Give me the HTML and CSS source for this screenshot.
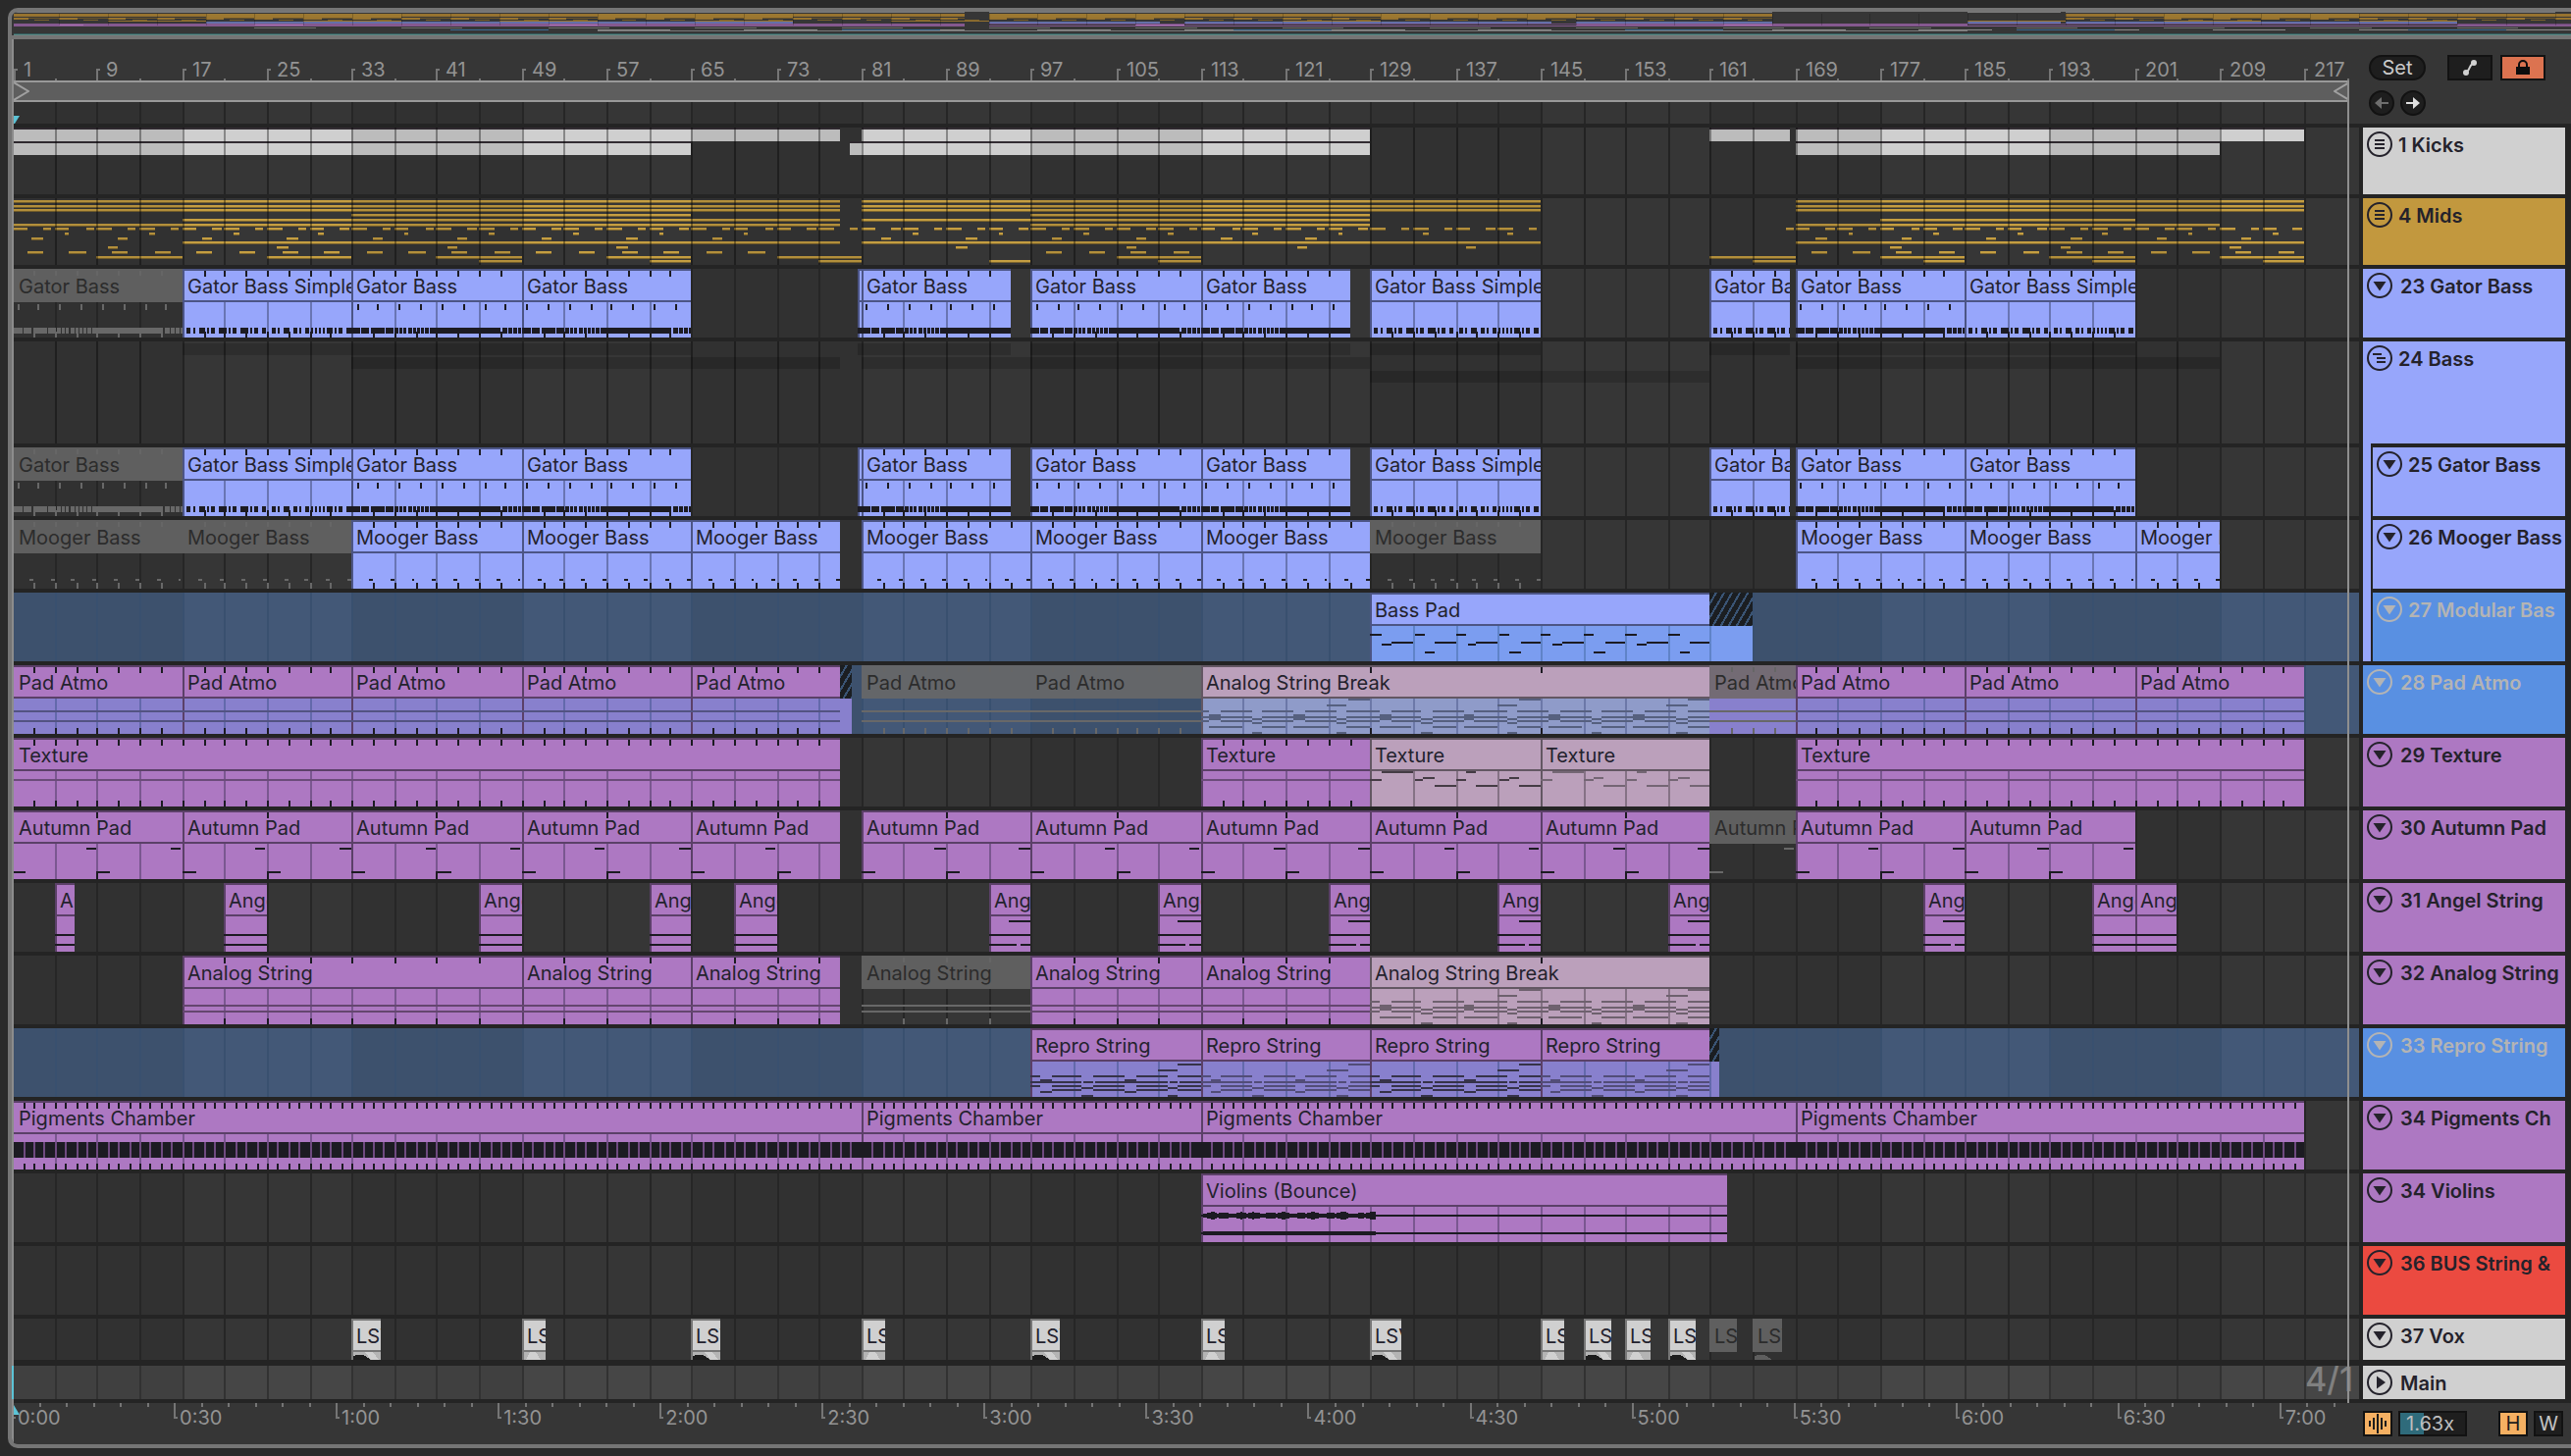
FILE: index.html
```html
<!DOCTYPE html>
<html lang="en">
<head>
  <meta charset="UTF-8">
  <meta content="width=device-width, initial-scale=1.0" name="viewport">
  <title>Arrangement</title>
  <link rel="stylesheet" href="styles.css">
</head>
<body>
<svg class="symbols" aria-hidden="true">
  <symbol id="fold" viewBox="0 0 26 26"><circle cx="13" cy="13" r="12" fill="none" stroke="currentColor" stroke-width="2"/><path d="M6.500 9h13L13 18.500z" fill="currentColor"/></symbol>
  <symbol id="unfold" viewBox="0 0 26 26"><circle cx="13" cy="13" r="12" fill="none" stroke="currentColor" stroke-width="2"/><path d="M10 6.500v13l9-6.500z" fill="currentColor"/></symbol>
  <symbol id="group" viewBox="0 0 26 26"><circle cx="13" cy="13" r="12" fill="none" stroke="currentColor" stroke-width="2"/><path d="M8 9h10M8 13h10M8 17h10" stroke="currentColor" stroke-width="2"/></symbol>
  <symbol id="group-open" viewBox="0 0 26 26"><circle cx="13" cy="13" r="12" fill="none" stroke="currentColor" stroke-width="2"/><path d="M6 9h9M10 13h9M10 17h9" stroke="currentColor" stroke-width="2"/></symbol>
</svg>

<main class="arrangement">
  <div class="overview"></div>

  <div class="top">
    <div class="time-area">
      <div class="bar-ruler"></div>
      <div class="loop">
        <div class="loop-brace">
          <svg width="16" height="18" viewBox="0 0 16 18"><path d="M0 0l15 9-15 9" fill="none" stroke="#a0a0a0" stroke-width="2"/></svg>
          <svg width="16" height="18" viewBox="0 0 16 18"><path d="M16 0L1 9l15 9" fill="none" stroke="#a0a0a0" stroke-width="2"/></svg>
        </div>
      </div>
      <div class="scrub lane" data-lane="scrub">
        <svg class="playhead" width="6" height="8" viewBox="0 0 6 8"><path d="M0 0h6L1 8H0z" fill="#5cc3d6"/></svg>
      </div>
    </div>
    <div class="panel">
      <div class="panel-row">
        <button type="button" class="pill">Set</button>
        <button type="button" class="square automation" aria-label="Automation mode"><svg width="16" height="18" viewBox="0 0 16 18"><path d="M3 14C8 14 7 4 13 4" fill="none" stroke="#d0d0d0" stroke-width="2"/><circle cx="4" cy="14" r="3" fill="#d0d0d0"/><circle cx="12" cy="4" r="3" fill="#d0d0d0"/></svg></button>
        <button type="button" class="square lock" aria-label="Lock envelopes"><svg width="16" height="16" viewBox="0 0 16 16"><path d="M4 8V5a4 4 0 0 1 8 0v3" fill="none" stroke="#0d0d0d" stroke-width="2"/><path d="M1 7h14v8H1z" fill="#0d0d0d"/></svg></button>
      </div>
      <div class="panel-row arrows">
        <button type="button" class="round" aria-label="Previous locator"><svg width="16" height="14" viewBox="0 0 16 14"><path d="M15 7H4" stroke="#6e6e6e" stroke-width="2"/><path d="M8 1v12L1 7z" fill="#6e6e6e"/></svg></button>
        <button type="button" class="round" aria-label="Next locator"><svg width="16" height="14" viewBox="0 0 16 14"><path d="M1 7h11" stroke="#e0e0e0" stroke-width="2"/><path d="M8 1v12l7-6z" fill="#e0e0e0"/></svg></button>
      </div>
    </div>
  </div>

  <div class="tracks">
    <section class="track group">
      <div class="lane" data-lane="kicks"></div>
      <header class="head white"><button type="button" class="fold" aria-label="Unfold"><svg><use href="#group"/></svg></button>1 Kicks</header>
    </section>
    <section class="track group">
      <div class="lane" data-lane="mids"></div>
      <header class="head gold"><button type="button" class="fold" aria-label="Unfold"><svg><use href="#group"/></svg></button>4 Mids</header>
    </section>
    <section class="track">
      <div class="lane" data-lane="gator"></div>
      <header class="head blue"><button type="button" class="fold" aria-label="Fold"><svg><use href="#fold"/></svg></button>23 Gator Bass</header>
    </section>
    <section class="track group tall">
      <div class="lane" data-lane="bass"></div>
      <header class="head blue"><button type="button" class="fold" aria-label="Fold"><svg><use href="#group-open"/></svg></button>24 Bass</header>
    </section>
    <section class="track nested">
      <div class="lane" data-lane="gator2"></div>
      <header class="head blue"><button type="button" class="fold" aria-label="Fold"><svg><use href="#fold"/></svg></button>25 Gator Bass</header>
    </section>
    <section class="track nested">
      <div class="lane" data-lane="mooger"></div>
      <header class="head blue"><button type="button" class="fold" aria-label="Fold"><svg><use href="#fold"/></svg></button>26 Mooger Bass</header>
    </section>
    <section class="track nested selected">
      <div class="lane" data-lane="basspad"></div>
      <header class="head"><button type="button" class="fold" aria-label="Fold"><svg><use href="#fold"/></svg></button>27 Modular Bas</header>
    </section>
    <section class="track selected">
      <div class="lane" data-lane="padatmo"></div>
      <header class="head"><button type="button" class="fold" aria-label="Fold"><svg><use href="#fold"/></svg></button>28 Pad Atmo</header>
    </section>
    <section class="track">
      <div class="lane" data-lane="texture"></div>
      <header class="head purple"><button type="button" class="fold" aria-label="Fold"><svg><use href="#fold"/></svg></button>29 Texture</header>
    </section>
    <section class="track">
      <div class="lane" data-lane="autumn"></div>
      <header class="head purple"><button type="button" class="fold" aria-label="Fold"><svg><use href="#fold"/></svg></button>30 Autumn Pad</header>
    </section>
    <section class="track">
      <div class="lane" data-lane="angel"></div>
      <header class="head purple"><button type="button" class="fold" aria-label="Fold"><svg><use href="#fold"/></svg></button>31 Angel String</header>
    </section>
    <section class="track">
      <div class="lane" data-lane="analog"></div>
      <header class="head purple"><button type="button" class="fold" aria-label="Fold"><svg><use href="#fold"/></svg></button>32 Analog String</header>
    </section>
    <section class="track selected">
      <div class="lane" data-lane="repro"></div>
      <header class="head"><button type="button" class="fold" aria-label="Fold"><svg><use href="#fold"/></svg></button>33 Repro String</header>
    </section>
    <section class="track">
      <div class="lane" data-lane="pigments"></div>
      <header class="head purple"><button type="button" class="fold" aria-label="Fold"><svg><use href="#fold"/></svg></button>34 Pigments Ch</header>
    </section>
    <section class="track">
      <div class="lane" data-lane="violins"></div>
      <header class="head purple"><button type="button" class="fold" aria-label="Fold"><svg><use href="#fold"/></svg></button>34 Violins</header>
    </section>
    <section class="track">
      <div class="lane" data-lane="bus"></div>
      <header class="head red"><button type="button" class="fold" aria-label="Fold"><svg><use href="#fold"/></svg></button>36 BUS String &amp;</header>
    </section>
    <section class="track short">
      <div class="lane" data-lane="vox"></div>
      <header class="head white"><button type="button" class="fold" aria-label="Fold"><svg><use href="#fold"/></svg></button>37 Vox</header>
    </section>
    <section class="track main-track">
      <div class="lane" data-lane="main"><span class="grid-size">4/1</span></div>
      <header class="head white"><button type="button" class="fold" aria-label="Unfold"><svg><use href="#unfold"/></svg></button>Main</header>
    </section>
    <div class="end-area"><div class="end-line"></div></div>
  </div>

  <div class="bottom">
    <div class="time-ruler"></div>
    <div class="zoom-controls">
      <button type="button" class="toggle on" aria-label="Waveform zoom"><svg width="22" height="22" viewBox="0 0 22 22"><path d="M3 8v6M7 5v12M11 1v20M15 5v12M19 8v6" stroke="#1c1c1c" stroke-width="2"/></svg></button>
      <input class="zoom" type="text" value="1.63x" aria-label="Zoom">
      <button type="button" class="toggle on height">H</button>
      <button type="button" class="toggle">W</button>
    </div>
  </div>
</main>
<script src="script.js"></script>
</body>
</html>
```
FILE: styles.css
```css
* {
  box-sizing: border-box;
}

body {
  background: #2a2a2a;
  color: #939393;
  font-family: Inter, "Liberation Sans", sans-serif;
  font-size: 20px;
  margin: 0;
  padding: 8px 0 8px 8px;
}

button,
input {
  color: inherit;
  font: inherit;
  margin: 0;
}

.symbols {
  display: none;
}

.arrangement {
  background: #363636;
  border: 4px solid #757575;
  border-radius: 10px 0 0 10px;
  border-right: 0;
  overflow: hidden;
}

.overview {
  border-bottom: 4px solid #757575;
  height: 28px;
  padding-left: 2px;

  & svg {
    display: block;
    height: 24px;
    width: 100%;
  }
}

/* ruler, loop brace and scrub area */

.top,
.tracks,
.bottom {
  border-left: 2px solid #8c8c8c;
}

.top {
  display: flex;
  gap: 4px;
  padding-right: 6px;
}

.time-area {
  flex: 1;
  min-width: 0;
}

.bar-ruler,
.time-ruler {
  height: 42px;
  overflow: hidden;
  position: relative;
}

.mark {
  border-left: 2px solid #757575;
  position: absolute;
}

.bar-ruler .mark {
  bottom: 0;
  height: 2px;

  &.major {
    height: 12px;
  }

  &.major::before {
    background: #757575;
    content: "";
    height: 2px;
    left: 0;
    position: absolute;
    top: 0;
    width: 2px;
  }

  & span {
    bottom: 1px;
    left: 8px;
    line-height: 20px;
    position: absolute;
  }
}

.time-ruler .mark {
  height: 4px;
  top: 0;

  &.major {
    height: 16px;
  }

  &.major::before {
    background: #757575;
    bottom: 0;
    content: "";
    height: 2px;
    left: 0;
    position: absolute;
    width: 2px;
  }

  & span {
    left: 4px;
    line-height: 20px;
    position: absolute;
    top: 5px;
  }
}

.time-ruler .start {
  left: 0;
  position: absolute;
  top: 2px;
}

.loop-brace {
  background: #5e5e5e;
  border-block: 2px solid #999;
  display: flex;
  height: 22px;
  justify-content: space-between;
  width: 99.6%;
}

.scrub {
  height: 22px;
}

.playhead {
  bottom: 0;
  left: 0;
  position: absolute;
}

.panel {
  display: flex;
  flex-direction: column;
  gap: 10px;
  padding: 16px 0 0 6px;
  width: 206px;
}

.panel-row {
  display: flex;
  gap: 8px;

  &.arrows {
    gap: 6px;
  }

  & button {
    align-items: center;
    background: #1e1e1e;
    border: 2px solid #121212;
    color: #cacaca;
    display: flex;
    height: 26px;
    justify-content: center;
    padding: 0;
  }

  & .pill {
    border-radius: 13px;
    margin-right: 14px;
    width: 58px;
  }

  & .square {
    width: 46px;
  }

  & .lock {
    background: #dc7350;
  }

  & .round {
    border-radius: 50%;
    width: 26px;
  }
}

/* tracks */

.tracks {
  background: #242424;
  display: flex;
  flex-direction: column;
  gap: 4px;
  padding-block: 4px;
  position: relative;
}

.track {
  display: flex;
  gap: 4px;
  height: 70px;
  padding-right: 6px;

  &.group {
    height: 68px;
  }

  &.tall {
    height: 104px;
  }

  &.short {
    height: 42px;
  }

  &.main-track {
    height: 34px;
    margin-top: 2px;
  }
}

.lane {
  background: #363636;
  flex: 1;
  min-width: 0;
  overflow: hidden;
  position: relative;
}

.lane > .notes {
  display: block;
  height: 100%;
  width: 100%;
}

.main-track .lane {
  background: #464646;
  box-shadow: -2px 0 #5cc3d6;
}

.selected .lane {
  background: #435877;
}

.title {
  color: #23222d;
  height: 34px;
  line-height: 36px;
  overflow: hidden;
  padding-left: 5px;
  position: absolute;
  top: 0;
  white-space: nowrap;

  &.off {
    color: #2c2c2c;
  }
}

.tail {
  background: repeating-linear-gradient(120deg, #1b1e22 0 5px, #3a5474 5px 7px);
  height: 34px;
  position: absolute;
  top: 0;
}

.grid-size {
  color: #808080;
  font-size: 34px;
  font-weight: 500;
  line-height: 28px;
  position: absolute;
  right: 6px;
  top: 0;
}

.head {
  color: #24222b;
  display: flex;
  font-weight: 600;
  gap: 8px;
  line-height: 36px;
  overflow: hidden;
  padding-left: 4px;
  white-space: nowrap;
  width: 206px;
}

.fold {
  background: none;
  border: 0;
  flex: none;
  height: 26px;
  margin-top: 4px;
  padding: 0;
  width: 26px;

  & svg {
    display: block;
    height: 26px;
    width: 26px;
  }
}

.group .head,
.nested .head {
  gap: 6px;
}

.white {
  background: #d0d0d0;
}

.gold {
  background: #c2983e;
}

.blue {
  background: #97a6fb;
}

.purple {
  background: #ad78c2;
}

.red {
  background: #eb4a40;
}

.selected .head {
  background: #5990e2;
  color: #b4b4b4;
}

.nested {
  position: relative;

  & .head {
    margin-left: 10px;
    width: 196px;
  }

  /* colour of the parent group runs down the left edge */
  &::after {
    background: #97a6fb;
    bottom: 0;
    content: "";
    position: absolute;
    right: 204px;
    top: -4px;
    width: 8px;
  }
}

.end-area {
  inset: -44px 216px 0 0;
  pointer-events: none;
  position: absolute;
}

.end-line {
  border-right: 2px solid #8f8f8f;
  height: 100%;
  width: 99.6%;
}

/* time ruler and zoom buttons */

.bottom {
  display: flex;
  gap: 4px;
  padding-right: 6px;
}

.time-ruler {
  flex: 1;
}

.zoom-controls {
  display: flex;
  gap: 6px;
  padding-top: 8px;
  width: 206px;

  & .height {
    margin-left: auto;
  }

  & .toggle:last-child {
    margin-right: 2px;
  }
}

.toggle {
  align-items: center;
  background: #1e1e1e;
  border: 2px solid #121212;
  color: #c4c4c4;
  display: flex;
  height: 26px;
  justify-content: center;
  padding: 0;
  width: 30px;

  &.on {
    background: #f5b062;
    color: #1c1c1c;
  }
}

.zoom {
  background: linear-gradient(90deg, #2f6b7b 24px, #1e1e1e 24px);
  border: 2px solid #121212;
  color: #bdbdbd;
  height: 26px;
  padding: 0 0 0 6px;
  width: 70px;
}
```
FILE: script.js
```js
const WIDTH = 2390;
const BAR = 10.815;

const colors = {
  blue: { fill: '#97a6fb', edge: '#4c5585', grid: '#6975b3', body: '#97a6fb' },
  blueSel: { fill: '#97a6fb', edge: '#4c5585', grid: '#5f83c8', body: '#7b9df0' },
  purple: { fill: '#ad78c2', edge: '#5b4068', grid: '#7a5790', body: '#ad78c2' },
  purpleSel: { fill: '#ad78c2', edge: '#5b4068', grid: '#6369ab', body: '#8880cd' },
  pink: { fill: '#bba0bb', edge: '#635763', grid: '#857285', body: '#bba0bb' },
  pinkSel: { fill: '#bba0bb', edge: '#635763', grid: '#6c78a8', body: '#8f9bc9' },
  white: { fill: '#d0d0d0', edge: '#777', grid: '#999', body: '#b4b4b4' },
};

// bar number -> x, snapped to the 2px raster
function pos(bar) {
  return Math.max(0, 2 * Math.floor(((bar - 1) * BAR - 0.6) / 2));
}

function rect(x, y, w, h, fill, opacity = 1) {
  return `<rect x="${x}" y="${y}" width="${w}" height="${h}" fill="${fill}"${opacity < 1 ? ` opacity="${opacity}"` : ''}/>`;
}

function span(from, to, y, h, fill, opacity) {
  return rect(pos(from), y, pos(to) - pos(from), h, fill, opacity);
}

function grid(height, line = '#262626') {
  let out = '';
  for (let b = 1; b < 222; b += 32) out += rect(pos(b), 0, pos(b + 16) - pos(b), height, '#000', 0.08);
  for (let b = 5; b < 222; b += 4) out += rect(pos(b), 0, 2, height, line);
  return out;
}

// [offset, end, y] in bars, repeated every `period` bars
function repeat(notes, period) {
  return (clip) => {
    const out = [];
    for (let p = 0; clip[0] + p < clip[1]; p += period) {
      notes.forEach(([a, b, y, h = 2]) => {
        if (clip[0] + p + a < clip[1]) out.push([clip[0] + p + a, Math.min(clip[0] + p + b, clip[1]), y, h]);
      });
    }
    return out;
  };
}

const line = (...ys) => (clip) => ys.map((y) => [clip[0], clip[1], y, 2]);

const simpleRow = [[4, 4], [11, 2], [17, 6], [25, 2], [29, 4], [37, 8], [47, 2], [51, 4], [59, 8], [69, 2], [73, 4], [81, 4], [91, 4], [97, 2], [103, 6], [113, 4], [119, 2], [125, 4], [131, 2], [135, 2], [139, 2], [143, 2], [147, 6], [155, 2], [159, 4], [167, 5]];
const denseRow = [[0, 9], [10, 8], [20, 14], [35, 8], [44, 4], [49, 3], [53, 3], [58, 4], [63, 3], [67, 3], [71, 3], [75, 4], [80, 72], [154, 5], [160, 4], [165, 4], [170, 3]];

const stringBreak = repeat([
  [0, .8, 46], [1.9, 4.8, 46], [5.8, 8.8, 46], [9.8, 12.8, 46], [13.8, 16, 46],
  [.8, 1.9, 50], [8.8, 9.8, 50], [0, 4.8, 52], [5.8, 12.8, 52], [13.8, 16, 52],
  [4.8, 5.8, 54], [12.8, 13.8, 54], [.8, 1.9, 54], [8.8, 9.8, 54],
  [0, .8, 56], [1.9, 4.8, 56], [5.8, 8.8, 56], [9.8, 12.8, 56], [13.8, 16, 56],
  [4.8, 5.8, 58], [12.8, 13.8, 58],
  [.8, 3.9, 62], [5.8, 8, 62], [8.8, 12, 62], [13.8, 16, 62],
  [4.8, 5.8, 68], [12.8, 13.8, 68], [11.9, 13.8, 40], [13.9, 16, 34],
], 16);
const repro = repeat([
  [13.9, 16, 36], [11.9, 13.9, 42],
  [0, .9, 48], [1.9, 4.8, 48], [5.9, 8.9, 48], [9.9, 12.8, 48], [13.9, 16, 48],
  [.9, 1.9, 52, 4], [8.9, 9.9, 52, 4], [0, 4.8, 54], [5, 5.8, 54], [6, 12.8, 54], [13, 13.8, 54], [14, 16, 54],
  [0, .9, 58], [1.9, 4.8, 58], [5.9, 8.9, 58], [9.9, 12.8, 58], [13.9, 16, 58],
  [4.8, 5.9, 60], [12.8, 13.9, 60], [1.9, 4.8, 62], [5.9, 8.9, 62], [9.9, 12.8, 62], [13.9, 16, 62],
  [.9, 1.9, 64], [8.9, 9.9, 64], [4.8, 5.9, 68], [12.8, 13.9, 68],
], 16);
const textureBreak = repeat([
  [0, 1.1, 42], [1.1, 4, 34], [4.1, 5, 42], [5, 6, 40], [6, 8, 48], [8.1, 9, 42], [9, 10, 34],
  [10, 12, 48], [12.1, 13, 42], [13, 14, 40], [14, 16, 48],
], 16);
const angel = line(52, 62);
const angelLong = (clip) => [[clip[0], clip[1], 52, 2], [clip[0], clip[0] + 2.6, 62, 2], [clip[0] + 3, clip[1], 62, 2], [clip[0] + 1.9, clip[1], 38, 2]];

const gatorClips = [
  [1, 17, 'Gator Bass', 'off'], [17, 33, 'Gator Bass Simple', 'blue'], [33, 49, 'Gator Bass', 'blue'], [49, 65, 'Gator Bass', 'blue'],
  [80.65, 81, '', 'blue'], [81, 95, 'Gator Bass', 'blue'], [97, 113, 'Gator Bass', 'blue'], [113, 127, 'Gator Bass', 'blue'],
  [129, 145, 'Gator Bass Simple', 'blue'], [161, 168.6, 'Gator Bass', 'blue', { simple: true }], [169, 185, 'Gator Bass', 'blue'],
];

// clip: [start bar, end bar, title, colour, overrides]
const lanes = {
  gator: { ticks: 2, gator: true, clips: [...gatorClips, [185, 201, 'Gator Bass Simple', 'blue']] },
  gator2: { ticks: 2, gator: true, clips: [...gatorClips, [185, 201, 'Gator Bass', 'blue']] },
  mooger: {
    ticks: 2,
    notes: repeat([[1.6, 1.95, 60]], 2),
    clips: [[1, 17, 'off'], [17, 33, 'off'], [33, 49], [49, 65], [65, 79], [81, 97], [97, 113], [113, 129], [129, 145, 'off'], [169, 185], [185, 201], [201, 209]]
      .map(([a, b, off]) => [a, b, 'Mooger Bass', off || 'blue']),
  },
  basspad: {
    selected: true,
    notes: repeat([[0, 1, 42], [1.1, 2, 52], [2, 4, 50], [4.1, 5.1, 42], [5.1, 6.1, 60], [6.1, 8, 50]], 8),
    clips: [[129, 161, 'Bass Pad', 'blueSel', { tail: 165 }]],
  },
  padatmo: {
    selected: true,
    ticks: 2,
    ink: '#535382',
    notes: line(46, 56),
    clips: [
      [1, 17, 'Pad Atmo', 'purpleSel'], [17, 33, 'Pad Atmo', 'purpleSel'], [33, 49, 'Pad Atmo', 'purpleSel'], [49, 65, 'Pad Atmo', 'purpleSel'],
      [65, 79, 'Pad Atmo', 'purpleSel', { tail: 80.1 }], [81, 97, 'Pad Atmo', 'off'], [97, 113, 'Pad Atmo', 'off'],
      [113, 161, 'Analog String Break', 'pinkSel', { ticks: 16, notes: stringBreak, ink: '#56607f' }],
      [161, 169, 'Pad Atmo', 'off', { body: '#8880cd', head: '#736b74' }],
      [169, 185, 'Pad Atmo', 'purpleSel'], [185, 201, 'Pad Atmo', 'purpleSel'], [201, 217, 'Pad Atmo', 'purpleSel'],
    ],
  },
  texture: {
    ticks: 2,
    ink: '#6b4b7a',
    notes: line(42),
    clips: [
      [1, 79, 'Texture', 'purple'], [113, 129, 'Texture', 'purple'],
      [129, 145, 'Texture', 'pink', { ticks: 0, notes: textureBreak, ink: '#453c45' }],
      [145, 161, 'Texture', 'pink', { ticks: 0, notes: textureBreak, ink: '#746674' }],
      [169, 217, 'Texture', 'purple'],
    ],
  },
  autumn: {
    ticks: 8,
    notes: repeat([[6.9, 7.9, 38], [0, 1.3, 62]], 8),
    clips: [[1, 17], [17, 33], [33, 49], [49, 65], [65, 79], [81, 97], [97, 113], [113, 129], [129, 145], [145, 161], [161, 169, 'off'], [169, 185], [185, 201]]
      .map(([a, b, off]) => [a, b, 'Autumn Pad', off || 'purple']),
  },
  angel: {
    notes: angel,
    clips: [[5, 6.8], [21, 25], [45, 49], [61, 65], [69, 73], [93, 97, 1], [109, 113, 1], [125, 129, 1], [141, 145, 1], [157, 161, 1], [181, 185, 1], [197, 201], [201, 205]]
      .map(([a, b, long]) => [a, b, 'Angel', 'purple', long ? { notes: angelLong } : {}]),
  },
  analog: {
    ticks: 4,
    ink: '#64466f',
    notes: line(50, 56),
    clips: [
      [17, 49, 'Analog String', 'purple'], [49, 65, 'Analog String', 'purple'], [65, 79, 'Analog String', 'purple'],
      [81, 97, 'Analog String', 'off'], [97, 113, 'Analog String', 'purple'], [113, 129, 'Analog String', 'purple'],
      [129, 161, 'Analog String Break', 'pink', { ticks: 16, notes: stringBreak, ink: '#6e616e' }],
    ],
  },
  repro: {
    selected: true,
    notes: repro,
    clips: [
      [97, 113, 'Repro String', 'purpleSel', { ink: '#363349' }], [113, 129, 'Repro String', 'purpleSel', { ink: '#524d78' }],
      [129, 145, 'Repro String', 'purpleSel', { ink: '#363349' }], [145, 161, 'Repro String', 'purpleSel', { ink: '#524d78', tail: 161.8 }],
    ],
  },
  pigments: {
    ticks: 1,
    notes: (clip) => [[clip[0], clip[1], 42, 16]],
    seams: '#6f4a80',
    clips: [[1, 81, 'Pigments Chamber', 'purple'], [81, 113, 'Pigments Chamber', 'purple'], [113, 169, 'Pigments Chamber', 'purple'], [169, 217, 'Pigments Chamber', 'purple']],
  },
  violins: {
    notes: line(42, 60),
    clips: [[113, 162.5, 'Violins (Bounce)', 'purple', { wave: 129.5 }]],
  },
  vox: {
    height: 42,
    clips: [[33, 35.8, 1], [49, 51.2], [65, 67.8, 1], [81, 83.2], [97, 99.8, 1], [113, 115.2], [129, 131.8, 1], [145, 147.2], [149, 151.7, 1], [153, 155.4], [157, 159.7, 1]]
      .map(([a, b, dark]) => [a, b, 'LSV', 'white', { vox: dark ? '#1c1c1c' : '#d0d0d0' }])
      .concat([[161, 163.5, 'LSV', 'off', {}], [165, 167.8, 'LSV', 'off', { vox: '#5e5e5e' }]]),
  },
};

function drawClip(lane, clip) {
  const [from, to, title, kind, extra = {}] = clip;
  const off = kind === 'off';
  const color = colors[kind];
  const height = lane.height || 70;
  const x = pos(from);
  const w = pos(to) - x;
  const ink = off ? '#686868' : extra.ink || lane.ink || '#1c1b22';
  const period = extra.ticks ?? lane.ticks;
  const bodyEnd = extra.tail ? pos(extra.tail) : x + w;
  let out = '';

  if (off) {
    if (extra.body) out += rect(x, 34, w, height - 34, extra.body);
    out += rect(x, 0, w, 34, extra.head || (lane.selected ? '#646669' : '#5f5f5f'));
  } else {
    out += rect(x, 34, bodyEnd - x, height - 34, color.body);
    for (let b = 5; b < 222; b += 4) {
      if (pos(b) > x && pos(b) < bodyEnd) out += rect(pos(b), 34, 2, height - 34, color.grid);
    }
    out += rect(x, 0, w, 34, color.fill) + rect(x, 0, w, 2, color.edge) + rect(x, 32, w, 2, color.edge);
    if (from > 1) out += rect(x, 0, 2, height, color.edge);
  }

  if (lane.gator) {
    const simple = extra.simple || title.endsWith('Simple');
    (simple ? simpleRow : denseRow).forEach(([a, n]) => {
      if (a < w) out += rect(x + a, 60, Math.min(n, w - a), 6, ink);
    });
    if (!simple && title) {
      for (let b = from + 0.45; b < to; b += 2) out += rect(pos(b), 36, 2, 6, ink);
    }
  }

  const notes = extra.notes || lane.notes;
  if (notes) notes(clip).forEach(([a, b, y, h]) => { out += rect(pos(a), y, Math.max(2, pos(b) - pos(a)), h, ink); });

  if (lane.seams) {
    for (let b = from + 1; b < to; b += 1) out += rect(pos(b), 42, 2, 16, lane.seams);
  }

  if (extra.wave) {
    for (let px = x + 2; px < pos(extra.wave); px += 2) {
      const n = 2 + Math.round(Math.abs(Math.sin(px * 0.31) + Math.sin(px * 0.11)));
      out += rect(px, 43 - n, 2, n * 2, ink) + rect(px, 59, 2, 4, ink);
    }
  }

  if (extra.vox) {
    out += extra.vox === '#d0d0d0'
      ? `<path d="M${x + 4} 42l4-8h6l5 8z" fill="${extra.vox}"/>`
      : (off ? '' : `<path d="M${x + 14} 34h8l6 8h-8z" fill="#d0d0d0"/>`) + `<path d="M${x + 2} 42v-4q7-3 12 0l6 4z" fill="${extra.vox}"/>`;
  }

  if (period) {
    const tickInk = off ? '#686868' : '#1c1b22';
    for (let b = from + period; b < to; b += period) {
      if (!off) out += rect(pos(b), 2, 2, 6, tickInk);
      else out += rect(pos(b), 2, 2, 5, '#666');
      out += rect(pos(b), height - 6, 2, 6, tickInk);
    }
  }
  return out;
}

const kicks = [
  [[1, 79], [81, 129], [161, 168.6], [169, 217]],
  [[1, 65], [79.9, 129], [169, 209]],
];
const bass = [
  [[17, 65], [80.6, 95], [97, 127], [129, 145], [161, 168.6], [169, 201]],
  [[33, 79], [81, 129], [169, 209]],
  [[129, 161]],
];

function every(start, end, step, w) {
  const out = [];
  for (let b = start; b <= end; b += step) out.push([b, b + w]);
  return out;
}

const mids = [
  [[1, 79], [81, 145], [169, 217]],
  [[1, 79], [81, 145], [169, 217]],
  [[1, 79], [81, 145], [169, 217]],
  [[33, 65], [97, 129]],
  [[17, 79], [81, 129], [177, 201]],
  [[1, 79], [97, 129], [169, 209]],
  [...every(1, 77, 4, 1.4), ...every(3.9, 76, 4, .8), [79.9, 80.6], ...every(81, 141, 4, 1.4), ...every(83.9, 144, 4, .8), [168.1, 168.8], ...every(169, 213, 4, 1.4), ...every(171.9, 216, 4, .8)],
  [...every(5.9, 70, 8, .5), ...every(85.9, 142, 8, .5), ...every(174, 214, 8, .5)],
  [...every(2.9, 67, 8, 1), ...every(82.9, 123, 8, 1), ...every(171, 211, 8, 1)],
  [[17, 79], [81, 145], [169, 217]],
  [...every(10, 58, 16, 1), ...every(90, 138, 16, 1), ...every(178, 210, 16, 1)],
  [...every(2.4, 71, 4, 1.5), ...every(98.4, 111, 4, 1.5), ...every(170.5, 215, 4, 1.5)],
  [[9, 17], [25, 33], [41, 49], [57, 65], [73, 81], [105, 113], [161, 169], [177, 185], [193, 201], [209, 217]],
  [[45, 49], [61, 65], [77, 81], [93, 97], [109, 113], [165, 169], [181, 185], [197, 201], [213, 217]],
];

function drawGroup(name, height) {
  let out = '';
  if (name === 'kicks') kicks.forEach((row, i) => row.forEach(([a, b]) => { out += span(a, b, i * 14, 14, '#332d33') + span(a, b, 2 + i * 14, 12, '#cfcfcf'); }));
  if (name === 'bass') bass.forEach((row, i) => row.forEach(([a, b]) => { out += span(a, b, 2 + i * 14, 12, '#000', 0.16); }));
  if (name === 'mids') {
    mids.forEach((row, i) => {
      const y = 2 + Math.round(i * 4.72);
      row.forEach(([a, b]) => { out += span(a, b, y, 2, '#c59e41') + span(a, b, y + 2, 1, '#7c652f'); });
    });
  }
  for (let b = 1; b < 222; b += 32) out += rect(pos(b), 0, pos(b + 16) - pos(b), height, '#000', 0.09);
  for (let b = 5; b < 222; b += 4) out += rect(pos(b), 0, 2, height, '#000', 0.35);
  return out;
}

document.querySelectorAll('.lane').forEach((el) => {
  const name = el.dataset.lane;
  const lane = lanes[name];
  const height = el.clientHeight;
  const lineColor = lane?.selected ? '#39506f' : name === 'main' ? '#323232' : '#262626';
  let marks = '';
  let html = '';

  if (['kicks', 'mids', 'bass'].includes(name)) marks = drawGroup(name, height);
  else marks = grid(height, lineColor);

  if (lane) {
    lane.clips.forEach((clip) => {
      const [from, to, title, kind, extra = {}] = clip;
      marks += drawClip(lane, clip);
      const left = pos(from) / WIDTH * 100;
      const width = (pos(to) - pos(from)) / WIDTH * 100;
      if (title) html += `<div class="title ${kind === 'off' ? 'off' : ''}" style="left: ${left}%; width: ${width}%">${title}</div>`;
      if (extra.tail) html += `<div class="tail" style="left: ${left + width}%; width: ${(pos(extra.tail) - pos(to)) / WIDTH * 100}%"></div>`;
    });
  }
  el.insertAdjacentHTML('afterbegin', `<svg class="notes" viewBox="0 0 ${WIDTH} ${height}" preserveAspectRatio="none" shape-rendering="crispEdges">${marks}</svg>${html}`);
});

function drawRulers() {
  let bars = '';
  for (let b = 1; b < 222; b += 4) {
    const major = b % 8 === 1;
    bars += `<div class="mark ${major ? 'major' : ''}" style="left: ${pos(b) / WIDTH * 100}%">${major ? `<span>${b}</span>` : ''}</div>`;
  }
  document.querySelector('.bar-ruler').innerHTML = bars;

  let times = '<svg class="start" width="6" height="10" viewBox="0 0 6 10"><path d="M0 0l6 10H0z" fill="#5cc3d6"/></svg>';
  for (let s = 0; s <= 435; s += 5) {
    const major = s % 30 === 0;
    const label = `${Math.floor(s / 60)}:${String(s % 60).padStart(2, '0')}`;
    times += `<div class="mark ${major ? 'major' : ''}" style="left: ${(s * 5.502 - 2) / WIDTH * 100}%">${major ? `<span>${label}</span>` : ''}</div>`;
  }
  document.querySelector('.time-ruler').innerHTML = times;
}

function drawOverview() {
  const X = (b) => Math.round((b - 1) * 12.47 - 4);
  const row = (a, b, y, h, fill) => rect(X(a), y, X(b) - X(a), h, fill);
  let out = '';
  [[1, 79], [81, 145], [161, 168.6], [169, 209]].forEach(([a, b]) => { out += row(a, b, 0, 1, '#7a7a7a'); });
  [[1, 79], [81, 129], [129, 145], [169, 225]].forEach(([a, b]) => {
    out += row(a, b, 2, 3, '#97732f') + row(a, b, 6, 1, '#6f5729');
    for (let x = a; x < b; x += 4) out += row(x, x + 1.5, 6, 2, '#97732f') + row(x + 2, x + 3.2, 8, 1, '#7c622d');
  });
  [[17, 33], [49, 65], [81, 97], [113, 129], [177, 193]].forEach(([a, b]) => { out += row(a, b, 2, 4, '#9c7831'); });
  [[9, 17], [25, 33], [41, 49], [57, 65], [73, 81], [105, 113], [161, 169], [177, 185], [193, 201]].forEach(([a, b]) => { out += row(a, b, 9, 1, '#97732f'); });
  [[17, 65], [81, 95], [97, 127], [129, 145], [161, 168.6], [169, 201]].forEach(([a, b]) => { out += row(a, b, 10, 2, '#6470a8'); });
  [[1, 17], [17, 79], [129, 161], [201, 217]].forEach(([a, b]) => { out += row(a, b, 12, 3, '#85598f'); });
  [[81, 129], [161, 217]].forEach(([a, b]) => { out += row(a, b, 12, 1, '#6d4a78') + row(a, b, 14, 1, '#85598f'); });
  [[5, 7], [21, 25], [45, 49], [93, 97], [141, 145]].forEach(([a, b]) => { out += row(a, b, 13, 1, '#a96fb0'); });
  for (let b = 21; b < 209; b += 12) out += row(b, b + 5, 16, 1, '#6e6e6e') + row(b + 28, b + 34, 18, 1, '#8a8a8a');
  for (let b = 37; b < 209; b += 32) out += row(b, b + 8, 18, 1, '#3a6c94');
  out += row(49, 161, 19, 1, '#777');
  out += row(1, 225, 22, 1, '#33595a') + row(1, 225, 23, 1, '#5d8a86');
  for (let b = 1; b < 212; b += 4) out += rect(X(b), 2, 1, 12, '#000', 0.2);
  document.querySelector('.overview').innerHTML = `<svg viewBox="0 0 2606 24" preserveAspectRatio="none" shape-rendering="crispEdges">${out}</svg>`;
}

drawRulers();
drawOverview();
```
